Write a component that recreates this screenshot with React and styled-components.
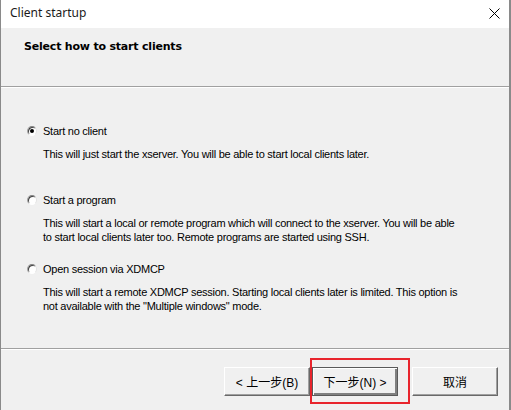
import React, { useState } from 'react'
import styled, { createGlobalStyle } from 'styled-components'

const GlobalStyle = createGlobalStyle`
  html, body {
    margin: 0;
    padding: 0;
    background: #f0f0f0;
  }
`

const Janela = styled.div`
  width: 511px;
  height: 410px;
  box-sizing: border-box;
  display: flex;
  flex-direction: column;
  background: #f0f0f0;
  border-left: 1px solid #8a8a8a;
  border-right: 2px solid #8a8a8a;
  font-family: "Liberation Sans", Arial, sans-serif;
  color: #000;
  overflow: hidden;
`

const BarraTitulo = styled.div`
  height: 28px;
  flex-shrink: 0;
  display: flex;
  align-items: center;
  justify-content: space-between;
  background: #fff;
  padding: 0 9px 3px 9px;
  box-sizing: border-box;
  font-family: "Noto Sans", "Open Sans", sans-serif;
  font-size: 12px;
  color: #1a1a1a;
`

const Fechar = styled.svg`
  width: 11px;
  height: 11px;
  margin-top: 2px;
`

const Cabecalho = styled.div`
  height: 58px;
  flex-shrink: 0;
  box-sizing: border-box;
  padding: 12px 0 0 23px;
  font-family: "DejaVu Sans", Tahoma, sans-serif;
  font-weight: bold;
  font-size: 11px;
  letter-spacing: -0.2px;
`

const Separador = styled.div`
  height: 0;
  border-top: 1px solid #a0a0a0;
  border-bottom: 1px solid #fff;
`

const Corpo = styled.div`
  flex: 1;
  display: flex;
  flex-direction: column;
  padding: 36px 0 0 25px;
  font-size: 11px;
  letter-spacing: -0.25px;
`

const Opcao = styled.div`
  display: flex;
  flex-direction: column;
  margin-bottom: 18px;
`

const Linha = styled.label`
  display: flex;
  align-items: center;
  height: 14px;
  cursor: default;
`

const Radio = styled.span`
  width: 10px;
  height: 10px;
  box-sizing: border-box;
  border-radius: 50%;
  border: 1px solid;
  border-color: #808080 #e3e3e3 #fff #a0a0a0;
  background: #fff;
  box-shadow: inset 1px 1px 0 #404040;
  margin: 0 6px 0 1px;
  display: flex;
  align-items: center;
  justify-content: center;

  &::after {
    content: "";
    width: 4px;
    height: 4px;
    border-radius: 50%;
    background: ${p => p.marcado ? '#000' : 'transparent'};
  }
`

const Descricao = styled.div`
  margin: 9px 0 0 17px;
  min-height: 28px;
  line-height: 14px;
`

const Rodape = styled.div`
  flex-shrink: 0;
  height: 60px;
  display: flex;
  justify-content: flex-end;
  align-items: flex-start;
  padding: 17px 11px 0 0;
  box-sizing: border-box;
`

const Botao = styled.button`
  width: 86px;
  height: 29px;
  box-sizing: border-box;
  margin-left: ${p => p.espaco || 0}px;
  background: #f0f0f0;
  border: 1px solid;
  border-color: #fff #696969 #696969 #fff;
  box-shadow: inset -1px -1px 0 #a0a0a0;
  font-family: "Liberation Sans", "Noto Sans CJK SC", sans-serif;
  font-size: 12px;
  color: #000;
  padding: 0;
  position: relative;

  ${p => p.padrao && `
    border: 1px solid #5a5a5a;
    box-shadow: inset 1px 1px 0 #fff, inset -2px -2px 0 #808080;
  `}
`

const Destaque = styled.span`
  position: absolute;
  left: -3px;
  top: -10px;
  width: 100px;
  height: 46px;
  box-sizing: border-box;
  border: 2px solid #e8242c;
  pointer-events: none;
`

const opcoes = [
  {
    titulo: 'Start no client',
    texto: ['This will just start the xserver. You will be able to start local clients later.']
  },
  {
    titulo: 'Start a program',
    texto: [
      'This will start a local or remote program which will connect to the xserver. You will be able',
      'to start local clients later too. Remote programs are started using SSH.'
    ]
  },
  {
    titulo: 'Open session via XDMCP',
    texto: [
      'This will start a remote XDMCP session. Starting local clients later is limited. This option is',
      'not available with the "Multiple windows" mode.'
    ]
  }
]

export default function App() {
  const [escolha, setEscolha] = useState(0)

  return (
    <Janela>
      <GlobalStyle />

      <BarraTitulo>
        <span>Client startup</span>
        <Fechar viewBox="0 0 11 11">
          <path d="M0.5 0.5 L10.5 10.5 M10.5 0.5 L0.5 10.5" stroke="#000" strokeWidth="1" fill="none" />
        </Fechar>
      </BarraTitulo>

      <Cabecalho>Select how to start clients</Cabecalho>
      <Separador />

      <Corpo>
        {opcoes.map((op, i) => (
          <Opcao key={i}>
            <Linha onClick={() => setEscolha(i)}>
              <Radio marcado={escolha === i} />
              {op.titulo}
            </Linha>
            <Descricao>
              {op.texto.map((t, j) => <div key={j}>{t}</div>)}
            </Descricao>
          </Opcao>
        ))}
      </Corpo>

      <Separador />

      <Rodape>
        <Botao>&lt; 上一步(B)</Botao>
        <Botao padrao espaco={2}>
          下一步(N) &gt;
          <Destaque />
        </Botao>
        <Botao espaco={14}>取消</Botao>
      </Rodape>
    </Janela>
  )
}
